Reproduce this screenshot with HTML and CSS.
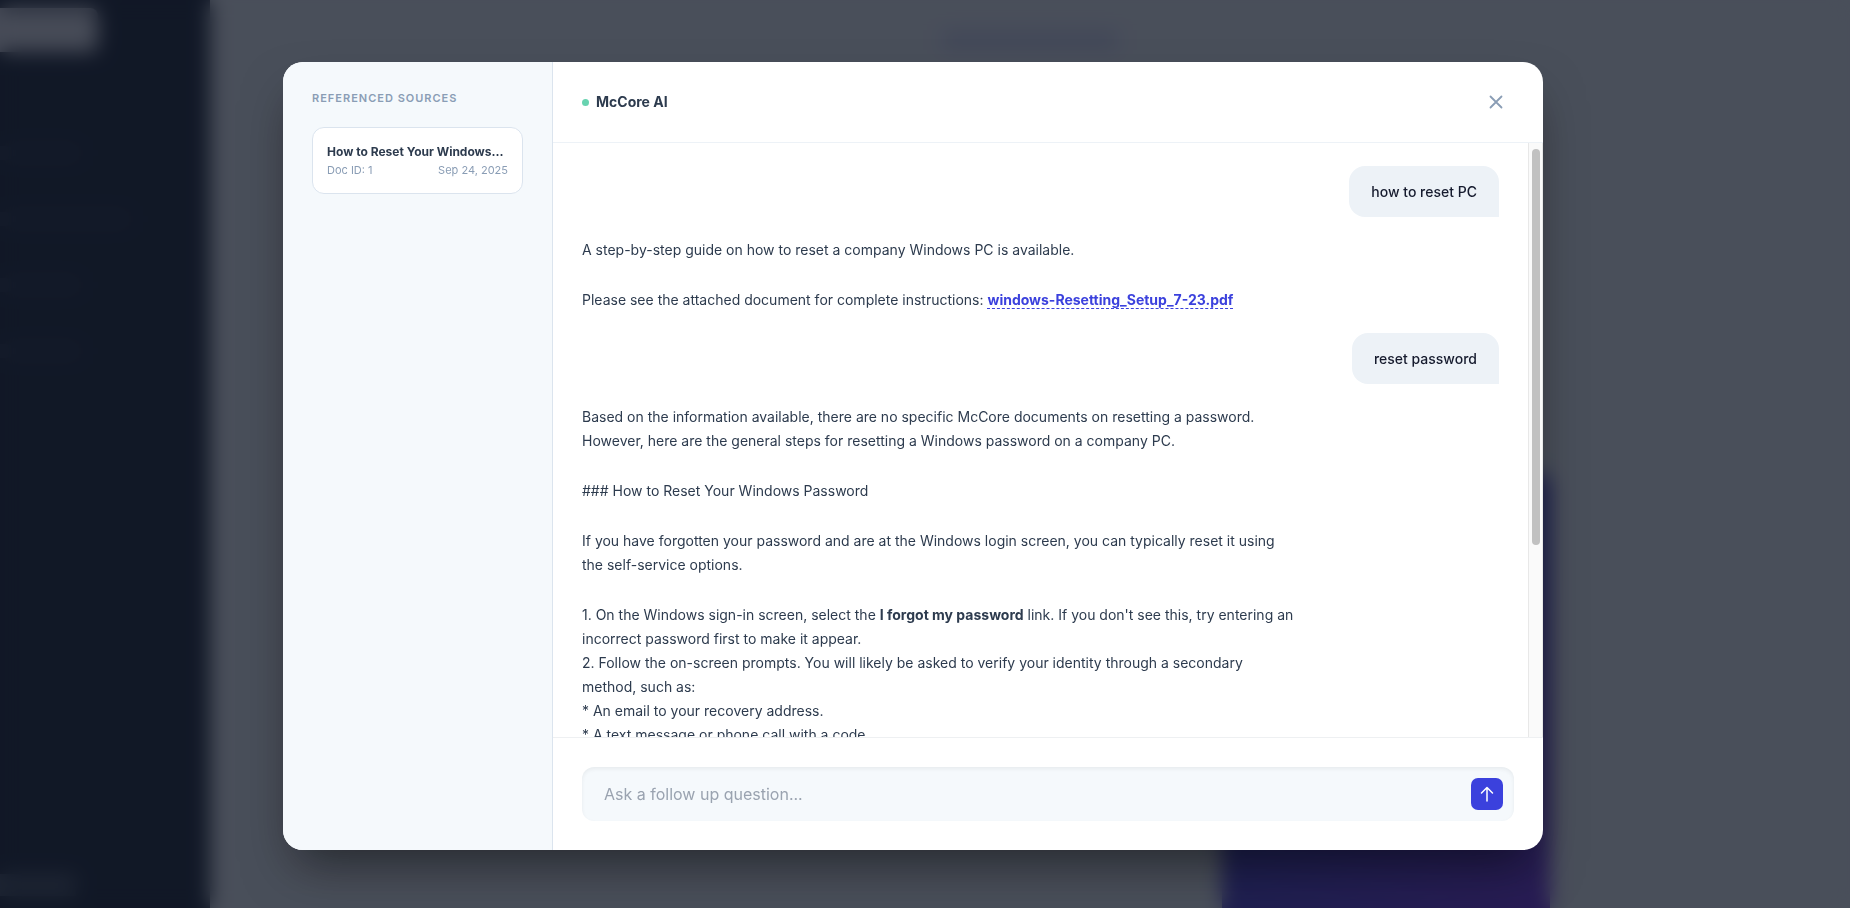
FILE: index.html
```html
<!DOCTYPE html>
<html lang="en">
<head>
	<meta charset="utf-8">
	<meta name="viewport" content="width=device-width, initial-scale=1">
	<title>McCore AI</title>
	<link rel="stylesheet" href="styles.css">
</head>
<body>

<div class="app" aria-hidden="true">
	<div class="app-nav">
		<div class="app-logo"></div>
		<div class="app-links">
			<span></span>
			<span class="wide"></span>
			<span></span>
			<span></span>
		</div>
		<div class="app-user"></div>
	</div>
	<div class="app-main">
		<div class="app-title"></div>
		<div class="app-promo"></div>
	</div>
</div>

<div class="overlay">
	<div class="modal" role="dialog" aria-modal="true" aria-labelledby="chat-title">
		<aside class="sources">
			<h2 class="sources-title">Referenced Sources</h2>
			<article class="source">
				<h3 class="source-name">How to Reset Your Windows...</h3>
				<div class="source-meta">
					<span>Doc ID: 1</span>
					<time datetime="2025-09-24">Sep 24, 2025</time>
				</div>
			</article>
		</aside>

		<section class="chat">
			<header class="chat-header">
				<span class="status-dot"></span>
				<h1 class="chat-title" id="chat-title">McCore AI</h1>
				<button class="close-btn" type="button" aria-label="Close">
					<svg width="20" height="20" viewBox="0 0 20 20" fill="none" stroke="currentColor" stroke-width="1.8" stroke-linecap="round">
						<path d="M4.5 4.5l11 11M15.5 4.5l-11 11"/>
					</svg>
				</button>
			</header>

			<div class="chat-body">
				<div class="messages" tabindex="0">
					<div class="message user">how to reset PC</div>

					<div class="message bot">
						<p>A step-by-step guide on how to reset a company Windows PC is available.</p>
						<p>Please see the attached document for complete instructions: <a href="#">windows-Resetting_Setup_7-23.pdf</a></p>
					</div>

					<div class="message user">reset password</div>

					<div class="message bot">
						<p>Based on the information available, there are no specific McCore documents on resetting a password. However, here are the general steps for resetting a Windows password on a company PC.</p>
						<p>### How to Reset Your Windows Password</p>
						<p>If you have forgotten your password and are at the Windows login screen, you can typically reset it using the self-service options.</p>
						<p>
							1. On the Windows sign-in screen, select the <strong>I forgot my password</strong> link. If you don't see this, try entering an incorrect password first to make it appear.<br>
							2. Follow the on-screen prompts. You will likely be asked to verify your identity through a secondary method, such as:<br>
							* An email to your recovery address.<br>
							* A text message or phone call with a code.
						</p>
					</div>
				</div>
				<div class="scrollbar" aria-hidden="true">
					<div class="scrollbar-thumb"></div>
				</div>
			</div>

			<form class="composer">
				<div class="composer-box">
					<input class="composer-input" type="text" placeholder="Ask a follow up question..." aria-label="Ask a follow up question">
					<button class="send-btn" type="submit" aria-label="Send">
						<svg width="18" height="18" viewBox="0 0 18 18" fill="none" stroke="currentColor" stroke-width="1.5" stroke-linecap="round" stroke-linejoin="round">
							<path d="M9 16V2.5M3.5 8L9 2.5 14.5 8"/>
						</svg>
					</button>
				</div>
			</form>
		</section>
	</div>
</div>

</body>
</html>
```

FILE: styles.css
```css
* {
	box-sizing: border-box;
}

body {
	margin: 0;
	height: 100vh;
	overflow: hidden;
	font-family: Inter, "Liberation Sans", sans-serif;
	color: #2d3b4e;
}

h1, h2, h3, p {
	margin: 0;
}

button {
	padding: 0;
	border: 0;
	cursor: pointer;
}

/* page behind the dialog */
.app {
	display: flex;
	height: 100vh;
	background-color: #eff1f2;
}

.app-nav {
	display: flex;
	flex-direction: column;
	width: 210px;
	padding: 8px 0 12px;
	background-color: #111827;
}

.app-logo {
	width: 98px;
	height: 44px;
	border-radius: 0 8px 8px 0;
	background-color: #e4e2e6;
}

.app-links {
	flex: 1;
	display: flex;
	flex-direction: column;
	gap: 52px;
	padding-top: 94px;
}

.app-links span {
	width: 80px;
	height: 14px;
	background-color: #1d2637;
}

.app-links .wide {
	width: 130px;
}

.app-user {
	width: 76px;
	height: 22px;
	background-color: #414a56;
}

.app-main {
	flex: 1;
	display: flex;
	flex-direction: column;
	justify-content: space-between;
	width: 100%;
	max-width: 1040px;
	margin: 0 auto;
}

.app-title {
	width: 176px;
	height: 20px;
	margin: 30px auto 0;
	background-color: #d2d5ee;
}

.app-promo {
	align-self: flex-end;
	width: 328px;
	height: 48vh;
	border-radius: 16px 16px 0 0;
	background: linear-gradient(135deg, #4338ca, #4338ca 50%, #6d28d9);
}

/* dialog */
.overlay {
	position: fixed;
	inset: 0;
	display: flex;
	align-items: center;
	justify-content: center;
	padding: 4px 24px 0 0;
	background-color: rgba(17, 24, 39, .75);
	backdrop-filter: blur(10px);
}

.modal {
	display: flex;
	width: 90%;
	max-width: 1260px;
	height: calc(100vh - 120px);
	overflow: hidden;
	border-radius: 20px;
	background-color: #fff;
	box-shadow: 0 25px 50px -12px rgba(0, 0, 0, .5);
}

.sources {
	width: 270px;
	flex-shrink: 0;
	padding: 28px 29px;
	border-right: 1px solid #dbe4ee;
	background-color: #f5f9fc;
}

.sources-title {
	margin-bottom: 20px;
	font-size: 11px;
	line-height: 17px;
	font-weight: 600;
	letter-spacing: 1px;
	text-transform: uppercase;
	color: #8a9db5;
}

.source {
	padding: 14px;
	border: 1px solid #dbe4ee;
	border-radius: 12px;
	background-color: #fff;
}

.source-name {
	font-size: 12px;
	line-height: 20px;
	font-weight: 700;
	white-space: nowrap;
	overflow: hidden;
	text-overflow: ellipsis;
}

.source-meta {
	display: flex;
	justify-content: space-between;
	font-size: 11px;
	line-height: 17px;
	color: #8a9db5;
}

.chat {
	flex: 1;
	display: flex;
	flex-direction: column;
	min-width: 0;
}

.chat-header {
	display: flex;
	align-items: center;
	gap: 7px;
	height: 81px;
	flex-shrink: 0;
	padding: 0 37px 0 29px;
	border-bottom: 1px solid #edf2f7;
}

.status-dot {
	width: 7px;
	height: 7px;
	border-radius: 50%;
	background-color: #68d3b0;
}

.chat-title {
	font-size: 14px;
	line-height: 24px;
	font-weight: 700;
}

.close-btn {
	display: flex;
	margin-left: auto;
	background: none;
	color: #8a9db5;
}

.chat-body {
	flex: 1;
	display: flex;
	min-height: 0;
}

.messages {
	flex: 1;
	display: flex;
	flex-direction: column;
	align-items: flex-start;
	gap: 21px;
	padding: 23px 29px;
	overflow-y: auto;
	scrollbar-width: none;
	outline: 0;
	font-size: 14px;
	line-height: 24px;
}

.scrollbar {
	width: 15px;
	padding: 6px 3px;
	border: 1px solid #e8e8e8;
	border-width: 0 1px;
	background-color: #fafafa;
}

.scrollbar-thumb {
	width: 8px;
	height: 68%;
	border-radius: 4px;
	background-color: #c1c1c1;
}

.message {
	flex-shrink: 0;
	max-width: 78%;
}

.message.user {
	align-self: flex-end;
	padding: 13px 22px;
	border-radius: 16px 16px 0 16px;
	background-color: #edf2f7;
	line-height: 25px;
	font-weight: 500;
	color: #161b2e;
}

.message.bot p + p {
	margin-top: 26px;
}

.message.bot strong {
	font-weight: 700;
}

.message.bot a {
	border-bottom: 1px dashed #3b41dd;
	font-weight: 700;
	text-decoration: none;
	color: #3b41dd;
}

.composer {
	padding: 29px;
	border-top: 1px solid #eef0f2;
}

.composer-box {
	display: flex;
	align-items: center;
	height: 54px;
	padding: 0 11px 0 22px;
	border-radius: 12px;
	background-color: #f5f9fc;
	box-shadow: inset 0 2px 4px rgba(0, 0, 0, .06);
}

.composer-input {
	flex: 1;
	min-width: 0;
	padding: 0;
	border: 0;
	outline: 0;
	background: none;
	font-family: inherit;
	font-size: 16px;
	line-height: 24px;
	color: #2d3b4e;
}

.composer-input::placeholder {
	color: #9aa3b0;
}

.send-btn {
	display: flex;
	align-items: center;
	justify-content: center;
	width: 32px;
	height: 32px;
	border-radius: 7px;
	background-color: #3b41dd;
	color: #fff;
}
```
